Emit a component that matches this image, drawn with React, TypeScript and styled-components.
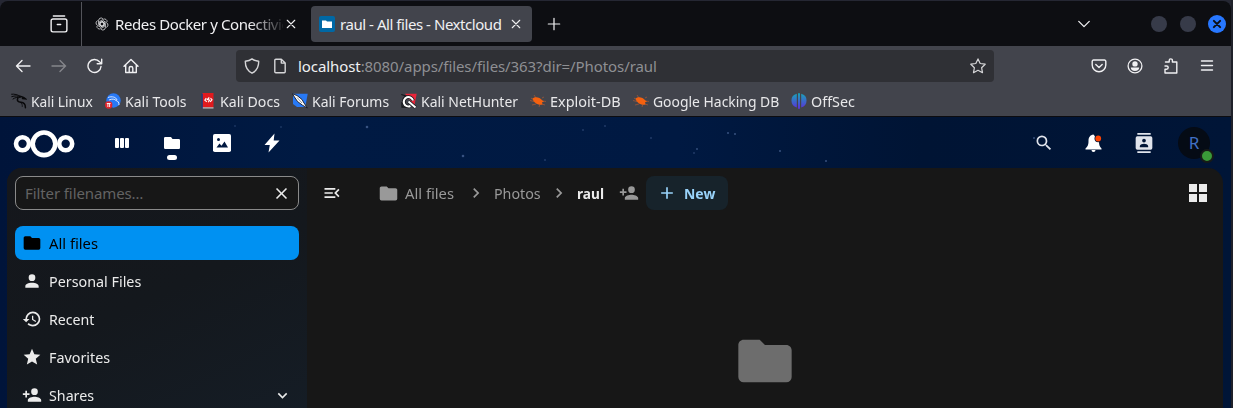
import React from 'react';
import styled, { createGlobalStyle } from 'styled-components';

const GlobalStyle = createGlobalStyle`
  * { box-sizing: border-box; }
  body {
    margin: 0;
    overflow: hidden;
    font-family: "Noto Sans", "Open Sans", sans-serif;
    font-size: 15px;
    background: #1e202a;
  }
  svg { display: block; flex: none; }
`;

const Window = styled.div`
  width: 1233px;
  height: 408px;
  padding-top: 1px;
  border-right: 2px solid #1f2129;
  background: #252733;
  display: flex;
  flex-direction: column;
  overflow: hidden;
`;

const Label = styled.span<{ $w: number; $gap?: number; $narrow?: number; $tone?: string; $bold?: boolean }>`
  flex: none;
  width: ${p => p.$w}px;
  letter-spacing: ${p => p.$gap ?? 0}px;
  transform: ${p => (p.$narrow ? `scaleX(${p.$narrow})` : 'none')};
  transform-origin: left;
  color: ${p => p.$tone ?? 'inherit'};
  font-weight: ${p => (p.$bold ? 700 : 400)};
  line-height: 20px;
  white-space: nowrap;
`;

const TabBar = styled.div`
  height: 45px;
  flex: none;
  display: flex;
  align-items: center;
  background: #0d0e12;
  color: #f0f0f2;
  border-radius: 8px 8px 0 0;
`;

const FirefoxView = styled.div`
  width: 82px;
  height: 44px;
  padding-left: 50px;
  display: flex;
  align-items: center;
  border-right: 1px solid #53545a;
`;

const Tab = styled.div<{ $active?: boolean }>`
  width: ${p => (p.$active ? 221 : 229)}px;
  height: 36px;
  display: flex;
  align-items: center;
  padding-left: ${p => (p.$active ? 8 : 13)}px;
  border-radius: 4px;
  background: ${p => (p.$active ? '#42444c' : 'transparent')};
`;

const TabTitle = styled(Label)<{ $fade?: boolean }>`
  margin-left: ${p => (p.$fade ? 6 : 5)}px;
  margin-right: ${p => (p.$fade ? 2 : 4)}px;
  mask-image: ${p => (p.$fade ? 'linear-gradient(to right, #000 80%, transparent 102%)' : 'none')};
`;

const NewTab = styled.div`
  margin-left: 15px;
  flex: 1;
`;

const WindowButtons = styled.div`
  display: flex;
  align-items: center;
  gap: 13px;
  margin-left: 60px;
  padding-right: 5px;
`;

const WindowDot = styled.div`
  width: 16px;
  height: 16px;
  border-radius: 50%;
  background: #373b49;
`;

const CloseDot = styled.div`
  width: 18px;
  height: 18px;
  margin-left: -1px;
  border-radius: 50%;
  background: #2777ff;
  color: #0d0e12;
  display: flex;
  align-items: center;
  justify-content: center;
`;

const Toolbar = styled.div`
  height: 40px;
  flex: none;
  display: flex;
  align-items: center;
  background: #42444c;
  color: #f0f0f2;
`;

const NavButtons = styled.div`
  width: 236px;
  padding-left: 15px;
  display: flex;
  gap: 20px;
`;

const UrlBar = styled.div`
  width: 758px;
  height: 32px;
  display: flex;
  align-items: center;
  padding: 0 8px;
  border-radius: 4px;
  background: #2f3035;
  color: #d6d6d8;
`;

const PageInfo = styled.div`
  margin-left: 12px;
`;

const Url = styled.div`
  flex: 1;
  margin-left: 10px;
  color: #8e8f93;
  letter-spacing: -0.08px;
  white-space: nowrap;
`;

const Host = styled.span`
  color: #f0f0f2;
`;

const ToolbarActions = styled.div`
  margin-left: auto;
  padding-right: 16px;
  display: flex;
  gap: 20px;
`;

const Bookmarks = styled.div`
  height: 31px;
  flex: none;
  display: flex;
  align-items: center;
  padding-left: 11px;
  background: #42444c;
  border-bottom: 1px solid #0c0c10;
  color: #e8e8ea;
`;

const Bookmark = styled.div`
  display: flex;
  align-items: center;
  gap: 4px;
  margin-right: 12px;
`;

const Page = styled.div`
  position: relative;
  flex: 1;
  display: flex;
  flex-direction: column;
  background: linear-gradient(90deg, #00143a 0%, #001a43 25%, #001942 55%, #001434 75%, #001537 100%);
`;

const Stars = styled.svg`
  position: absolute;
  top: 0;
  left: 0;
`;

const Header = styled.div`
  height: 51px;
  flex: none;
  display: flex;
  align-items: center;
  padding: 0 12px;
  color: #fff;
`;

const Logo = styled.svg`
  margin-right: 22px;
`;

const AppEntry = styled.div`
  position: relative;
  width: 50px;
  height: 51px;
  display: flex;
  align-items: center;
  justify-content: center;
`;

const ActiveMark = styled.div`
  position: absolute;
  left: 20px;
  top: 38px;
  width: 10px;
  height: 5px;
  border-radius: 3px;
  background: #fff;
`;

const HeaderEnd = styled.div`
  margin-left: auto;
  display: flex;
  color: #e0e4ec;
`;

const Avatar = styled.div`
  width: 32px;
  height: 32px;
  border-radius: 50%;
  background: #050b15;
  color: #4170c4;
  font-size: 17px;
  line-height: 32px;
  text-align: center;
`;

const Status = styled.div`
  position: absolute;
  left: 31px;
  top: 32px;
  width: 14px;
  height: 14px;
  border-radius: 50%;
  border: 2px solid #171b18;
  background: #3a9a38;
`;

const Panel = styled.div`
  flex: 1;
  min-height: 0;
  margin: 0 8px 0 7px;
  display: flex;
  border-radius: 15px 15px 0 0;
  background: #171717;
  overflow: hidden;
`;

const Sidebar = styled.div`
  width: 300px;
  flex: none;
  padding: 8px;
  background: linear-gradient(155deg, #15171c 0%, #14181d 50%, #151d26 100%);
`;

const Filter = styled.div`
  height: 34px;
  margin-bottom: 16px;
  padding: 0 7px 0 9px;
  display: flex;
  align-items: center;
  justify-content: space-between;
  border: 1px solid #8a8a8a;
  border-radius: 8px;
  background: #171717;
  color: #ebebeb;
`;

const NavItem = styled.div<{ $active?: boolean }>`
  height: 34px;
  margin-bottom: 4px;
  padding: 0 7px;
  display: flex;
  align-items: center;
  gap: 7px;
  border-radius: 8px;
  background: ${p => (p.$active ? '#0091f2' : 'transparent')};
  color: ${p => (p.$active ? '#000' : '#ebebeb')};
`;

const Spacer = styled.div`
  flex: 1;
`;

const Main = styled.div`
  flex: 1;
  display: flex;
  flex-direction: column;
  align-items: center;
`;

const Crumbs = styled.div`
  width: 100%;
  height: 50px;
  padding: 0 16px 0 15px;
  display: flex;
  align-items: center;
  color: #999;
`;

const Collapse = styled.div`
  color: #ebebeb;
`;

const CrumbFolder = styled.div`
  margin: 0 6px 0 36px;
`;

const Chevron = styled.div<{ $before: number }>`
  margin: 0 8px 0 ${p => p.$before}px;
`;

const ShareMark = styled.div`
  margin: 0 7px 0 14px;
`;

const NewButton = styled.div`
  width: 82px;
  height: 34px;
  padding-left: 11px;
  display: flex;
  align-items: center;
  gap: 7px;
  border-radius: 8px;
  background: #17232b;
  color: #99d3fa;
`;

const EmptyState = styled.div`
  margin-top: 111px;
  color: #6d6d6d;
`;

const shapes = {
  folder: 'M10,4H4C2.89,4 2,4.89 2,6V18A2,2 0 0,0 4,20H20A2,2 0 0,0 22,18V8C22,6.89 21.1,6 20,6H12L10,4Z',
  account: 'M12,4A4,4 0 0,1 16,8A4,4 0 0,1 12,12A4,4 0 0,1 8,8A4,4 0 0,1 12,4M12,14C16.42,14 20,15.79 20,18V20H4V18C4,15.79 7.58,14 12,14Z',
  history: 'M13.5,8H12V13L16.28,15.54L17,14.33L13.5,12.25V8M13,3A9,9 0 0,0 4,12H1L4.96,16.03L9,12H6A7,7 0 0,1 13,5A7,7 0 0,1 20,12A7,7 0 0,1 13,19C11.07,19 9.32,18.21 8.06,16.94L6.64,18.36C8.27,20 10.5,21 13,21A9,9 0 0,0 22,12A9,9 0 0,0 13,3',
  star: 'M12,17.27L18.18,21L16.54,13.97L22,9.24L14.81,8.62L12,2L9.19,8.62L2,9.24L7.45,13.97L5.82,21L12,17.27Z',
  accountPlus: 'M15,14C12.33,14 7,15.33 7,18V20H23V18C23,15.33 17.67,14 15,14M6,10V7H4V10H1V12H4V15H6V12H9V10M15,12A4,4 0 0,0 19,8A4,4 0 0,0 15,4A4,4 0 0,0 11,8A4,4 0 0,0 15,12Z',
  right: 'M8.59,16.58L13.17,12L8.59,7.41L10,6L16,12L10,18L8.59,16.58Z',
  down: 'M7.41,8.58L12,13.17L16.59,8.58L18,10L12,16L6,10L7.41,8.58Z',
  menuOpen: 'M21,15.61L19.59,17L14.58,12L19.59,7L21,8.39L17.44,12L21,15.61M3,6H16V8H3V6M3,13V11H13V13H3M3,18V16H16V18H3Z',
  plus: 'M19,13H13V19H11V13H5V11H11V5H13V11H19V13Z',
  close: 'M19,6.41L17.59,5L12,10.59L6.41,5L5,6.41L10.59,12L5,17.59L6.41,19L12,13.41L17.59,19L19,17.59L13.41,12L19,6.41Z',
  magnify: 'M9.5,3A6.5,6.5 0 0,1 16,9.5C16,11.11 15.41,12.59 14.44,13.73L14.71,14H15.5L20.5,19L19,20.5L14,15.5V14.71L13.73,14.44C12.59,15.41 11.11,16 9.5,16A6.5,6.5 0 0,1 3,9.5A6.5,6.5 0 0,1 9.5,3M9.5,5C7,5 5,7 5,9.5C5,12 7,14 9.5,14C12,14 14,12 14,9.5C14,7 12,5 9.5,5Z',
  contacts: 'M20,0H4V2H20V0M4,24H20V22H4V24M20,4H4A2,2 0 0,0 2,6V18A2,2 0 0,0 4,20H20A2,2 0 0,0 22,18V6A2,2 0 0,0 20,4M12,6.75A2.25,2.25 0 0,1 14.25,9A2.25,2.25 0 0,1 12,11.25A2.25,2.25 0 0,1 9.75,9A2.25,2.25 0 0,1 12,6.75M17,17H7V15.5C7,13.83 10.33,13 12,13C13.67,13 17,13.83 17,15.5V17Z',
};

const Icon = ({ name, size = 20 }: { name: keyof typeof shapes; size?: number }) => (
  <svg width={size} height={size} viewBox="0 0 24 24" fill="currentColor"><path d={shapes[name]} /></svg>
);

const Line = ({ children, size = 16, stroke = 1.4 }: { children: React.ReactNode; size?: number; stroke?: number }) => (
  <svg width={size} height={size} viewBox="0 0 16 16" fill="none" stroke="currentColor" strokeWidth={stroke} strokeLinecap="round" strokeLinejoin="round">{children}</svg>
);

const OpenAi = () => (
  <svg width="14" height="14" viewBox="0 0 24 24" fill="none" stroke="#dcdcde" strokeWidth="1.3" strokeLinejoin="round">
    {[0, 60, 120, 180, 240, 300].map(a => (
      <path key={a} transform={`rotate(${a} 12 12)`} d="M8.6 14V7.3L14.2 4a4.4 4.4 0 0 1 6.5 4.6M8.6 10l3.4-2 5.8 3.3" />
    ))}
  </svg>
);

const Dragon = () => (
  <svg width="16" height="16" viewBox="0 0 16 16" fill="none" stroke="#08080a" strokeLinecap="round">
    <path d="M.6 1.2C3.5.9 6.5 1.6 9 3.2M.8 3.6C4 2.5 7 2.8 9.5 4M2 6c2-1.500 4.500-2 7-1.600" strokeWidth="1" />
    <path d="M9 3.2c2.5.3 3.8 1 5.5 2.600l-3-.4M7 4.800C5.500 7.500 7 9 10 9.300c3 .3 4.500 2.200 4.400 5.400" strokeWidth="1.5" />
    <path d="M9.500 9.500c1.500 1 2 2.500 1.800 4" strokeWidth=".8" />
  </svg>
);

const Tools = () => (
  <svg width="16" height="16" viewBox="0 0 16 16">
    <circle cx="8.500" cy="7.500" r="7.200" fill="#2879f5" />
    <path d="M3 4.500c4-1.500 8-.5 9 2.500M4 7c3-1.500 6-1 7 .5 2 .5 3 2 3 4.500" stroke="#dbe9ff" strokeWidth="1" fill="none" />
    <circle cx="3.700" cy="12" r="3.700" fill="#e0242c" />
    <path d="M1.800 10.500h3.800M2.900 10.500V14M4.600 10.500V14" stroke="#fff" strokeWidth=".9" />
  </svg>
);

const Docs = () => (
  <svg width="16" height="16" viewBox="0 0 16 16">
    <path d="M2 0h11.500v14.500H2z" fill="#e01a1e" /><path d="M1.500.5h1.300v15H1.500z" fill="#173a82" />
    <path d="M2.800 14.300h10.700v1.200H2.800z" fill="#c9c4c4" />
    <path d="M6.300 5 4.800 7.200 6.800 8.700M10.500 5l1.500 1.700-1.800 2.300M9.300 4.500 7.300 6.500l2.400.6-1.500 2.200" stroke="#fff" strokeWidth="1.100" fill="none" />
  </svg>
);

const Forums = () => (
  <svg width="16" height="16" viewBox="0 0 16 16">
    <path d="M1 .8h14.700L13.300 14H5L1 11z" fill="#2879f5" />
    <path d="M.3.8 5 2.500l5 4 2 3.500 3.300 5-4.800-2.800L5.500 8.500z" fill="#fff" stroke="#171a22" strokeWidth=".9" />
    <path d="m5 4.500 5 5.500" stroke="#60656f" strokeWidth=".7" />
  </svg>
);

const NetHunter = () => (
  <svg width="16" height="16" viewBox="0 0 16 16">
    <path d="M4 .8h11.700L13.500 12 8 6z" fill="#e9253a" />
    <path d="M.3 1.500 5 3 2 6M1 9v5h4" stroke="#15161a" strokeWidth="1.300" fill="none" />
    <path d="M12 7.500A4.700 4.700 0 1 0 9.500 13M7.500 8.500l7 6" fill="none" stroke="#15161a" strokeWidth="3.600" />
    <path d="M12 7.500A4.700 4.700 0 1 0 9.500 13M7.500 8.500l7 6" fill="none" stroke="#fff" strokeWidth="2.100" />
  </svg>
);

const Exploit = () => (
  <svg width="16" height="16" viewBox="0 0 16 16">
    <path d="m1 5 3 2M4 2l2 3M0 7.500l4 1M2 12l4-1M9 14l1-3M12 5l2-1M13 8l3 .5M12 11l3 1" stroke="#a85a38" strokeWidth=".7" />
    <path d="M2.500 5.500C5.500 3 10 4.500 12 7l2 1.800-2 .4.500 2.300C9 12.300 5.500 11 3.500 8z" fill="#f5610f" />
  </svg>
);

const OffSec = () => (
  <svg width="16" height="16" viewBox="0 0 16 16">
    <defs><linearGradient id="offsec" x2="0" y2="1"><stop stopColor="#18a4b8" /><stop offset="1" stopColor="#5c2fdc" /></linearGradient></defs>
    <path d="M5.800.8v13.600A7 7 0 0 1 5.800.8zM7 .3h2v15.400H7zM10.200.8a7 7 0 0 1 0 13.600z" fill="url(#offsec)" />
  </svg>
);

const bookmarks: [string, number, number, () => React.ReactElement][] = [
  ['Kali Linux', 62, 0.915, Dragon],
  ['Kali Tools', 63, 0.935, Tools],
  ['Kali Docs', 60, 0.94, Docs],
  ['Kali Forums', 77, 0.93, Forums],
  ['Kali NetHunter', 97, 0.93, NetHunter],
  ['Exploit-DB', 71, 0.965, Exploit],
  ['Google Hacking DB', 126, 0.927, Exploit],
  ['OffSec', 50, 0.955, OffSec],
];

const starPoints = [[367, 10, 1.3], [463, 39, 1.3], [545, 43, .8], [583, 13, .8], [605, 9, .8], [651, 21, .8], [728, 16, 1], [735, 17, 1], [697, 32, .9], [694, 36, .8], [780, 34, 1], [826, 44, 1], [1034, 21, 1], [235, 9, .7], [281, 10, .7]];

export default function App() {
  return (
    <>
      <GlobalStyle />
      <Window>
        <TabBar>
          <FirefoxView>
            <Line size={18} stroke={1.25}><path d="M3 .9h10M2.600 3.600h10.800a1.600 1.600 0 0 1 1.600 1.600v8.200a1.600 1.600 0 0 1-1.600 1.600H2.600A1.600 1.600 0 0 1 1 13.400V5.200a1.600 1.600 0 0 1 1.600-1.600zM6.500 8.500h3" /></Line>
          </FirefoxView>
          <Tab>
            <OpenAi />
            <TabTitle $w={168} $gap={-0.4} $fade>Redes Docker y Conectivid</TabTitle>
            <Line size={12} stroke={1.5}><path d="m3 3 10 10M13 3 3 13" /></Line>
          </Tab>
          <Tab $active>
            <svg width="16" height="16" viewBox="0 0 16 16"><rect width="16" height="16" rx="2" fill="#0068a5" /><path d="M3 4.500h4l1 1h5v6.500H3z" fill="#fff" /></svg>
            <TabTitle $w={166} $gap={-0.45}>raul - All files - Nextcloud</TabTitle>
            <Line size={12} stroke={1.5}><path d="m3 3 10 10M13 3 3 13" /></Line>
          </Tab>
          <NewTab><Line size={14}><path d="M8 1.500v13M1.500 8h13" /></Line></NewTab>
          <Line size={14} stroke={1.5}><path d="m2 5 6 6 6-6" /></Line>
          <WindowButtons>
            <WindowDot /><WindowDot />
            <CloseDot><Line size={10} stroke={3.2}><path d="m3 3 10 10M13 3 3 13" /></Line></CloseDot>
          </WindowButtons>
        </TabBar>
        <Toolbar>
          <NavButtons>
            <Line><path d="M15 8H1.500M7 2.500 1.500 8 7 13.500" /></Line>
            <svg width="16" height="16" viewBox="0 0 16 16" fill="none" stroke="#85868b" strokeWidth="1.400" strokeLinecap="round"><path d="M1 8h13.500M9 2.500 14.500 8 9 13.500" /></svg>
            <Line><path d="M14 8.500A6.500 6.500 0 1 1 12.500 3.800L14.500 5.500M14.700 1.200v4.500h-4.500" /></Line>
            <Line><path d="M1 8.300 8 1.500l7 6.800M2.700 7v7.500h10.600V7M6.200 14.300v-4a1.800 1.800 0 0 1 3.600 0v4" /></Line>
          </NavButtons>
          <UrlBar>
            <Line><path d="M8 .9C6 2.500 4 3 1.300 3.200 1.200 8.500 3 12.800 8 15.200c5-2.400 6.800-6.700 6.700-12C12 3 10 2.500 8 .9z" /></Line>
            <PageInfo>
              <Line><path d="M3.800 1.200h5.500l3.900 3.900v8.700a1 1 0 0 1-1 1H3.800a1 1 0 0 1-1-1V2.200a1 1 0 0 1 1-1zM9.300 1.200v3.900h3.900" /></Line>
            </PageInfo>
            <Url><Host>localhost</Host>:8080/apps/files/files/363?dir=/Photos/raul</Url>
            <Line stroke={1.2}><path d="m8 .9 2.200 4.600 5 .7-3.600 3.500.9 5L8 12.300l-4.500 2.400.9-5L.8 6.200l5-.7z" /></Line>
          </UrlBar>
          <ToolbarActions>
            <Line><path d="M2.500 2h11a1.300 1.300 0 0 1 1.300 1.300V7a6.800 6.800 0 0 1-13.600 0V3.300A1.300 1.300 0 0 1 2.500 2zM4.800 6.500 8 9.500l3.200-3" /></Line>
            <svg width="16" height="16" viewBox="0 0 16 16" fill="currentColor"><circle cx="8" cy="8" r="6.900" fill="none" stroke="currentColor" strokeWidth="1.300" /><circle cx="8" cy="5.900" r="2.700" /><path d="M3.800 9.500h8.400c0 2-1.700 3.500-4.200 3.500s-4.200-1.500-4.200-3.500z" /></svg>
            <Line><path d="M2.500 4h3.700V2.500a1.600 1.600 0 0 1 3.200 0V4h4.400v11H2v-3.800h1.600a1.600 1.600 0 0 0 0-3.200H2" /></Line>
            <Line><path d="M2.500 3h11M2.500 7.500h11M2.500 12h11" /></Line>
          </ToolbarActions>
        </Toolbar>
        <Bookmarks>
          {bookmarks.map(([label, w, narrow, Glyph]) => (
            <Bookmark key={label}><Glyph /><Label $w={w} $narrow={narrow}>{label}</Label></Bookmark>
          ))}
        </Bookmarks>
        <Page>
          <Stars width="1231" height="51" fill="#6580b5" opacity=".55">
            {starPoints.map(([x, y, r]) => <circle key={x} cx={x} cy={y} r={r} />)}
          </Stars>
          <Header>
            <Logo width="63" height="30" viewBox="0 0 63 30" fill="none" stroke="#fff" strokeWidth="4.600">
              <circle cx="10.500" cy="15.800" r="6.500" /><circle cx="32" cy="15.800" r="11.300" /><circle cx="53.700" cy="15.800" r="6.500" />
            </Logo>
            <AppEntry><svg width="14" height="10" fill="#fff"><rect width="4" height="10" rx="1" /><rect x="5" width="4" height="10" rx="1" /><rect x="10" width="4" height="10" rx="1" /></svg></AppEntry>
            <AppEntry>
              <svg width="16" height="12" viewBox="0 0 16 12" fill="#fff"><path d="M1.200 0H7l1.500 2h6.300A1.200 1.200 0 0 1 16 3.200v7.600a1.200 1.200 0 0 1-1.200 1.200H1.200A1.200 1.200 0 0 1 0 10.800V1.200A1.200 1.200 0 0 1 1.200 0z" /></svg>
              <ActiveMark />
            </AppEntry>
            <AppEntry><svg width="18" height="18" viewBox="0 0 18 18"><rect width="18" height="18" rx="1.800" fill="#fff" /><circle cx="5.500" cy="5.500" r="1.500" fill="#001840" /><path d="M3.500 13.500 6.500 9.500l2 2.300 3-4.300 3.500 6z" fill="#001840" /></svg></AppEntry>
            <AppEntry><svg width="16" height="20" viewBox="0 0 16 20" fill="#fff"><path d="M10.500.5.500 12h5.300L4.500 19.500 15.500 7.500H9.700z" /></svg></AppEntry>
            <HeaderEnd>
              <AppEntry><Icon name="magnify" /></AppEntry>
              <AppEntry><svg width="18" height="18" viewBox="0 0 18 18" fill="#fff"><path d="M8.500.5C5 1 3.500 3.500 3.500 7c0 4-.8 5.500-3 7.500V15.500h16V14.500c-2-2-2.500-3.500-2.500-7zM6.500 16h4a2 2 0 0 1-4 0z" /><circle cx="13.200" cy="4.500" r="3.700" fill="#001537" /><circle cx="13.200" cy="4.500" r="2.900" fill="#ff4402" /></svg></AppEntry>
              <AppEntry><Icon name="contacts" /></AppEntry>
              <AppEntry><Avatar>R</Avatar><Status /></AppEntry>
            </HeaderEnd>
          </Header>
          <Panel>
            <Sidebar>
              <Filter><Label $w={120} $gap={-0.1} $tone="#636363">Filter filenames…</Label><Icon name="close" size={19} /></Filter>
              <NavItem $active><Icon name="folder" /><Label $w={80} $narrow={0.985}>All files</Label></NavItem>
              <NavItem><Icon name="account" /><Label $w={110} $narrow={0.955}>Personal Files</Label></NavItem>
              <NavItem><Icon name="history" /><Label $w={80} $narrow={0.945}>Recent</Label></NavItem>
              <NavItem><Icon name="star" /><Label $w={80} $narrow={0.955}>Favorites</Label></NavItem>
              <NavItem><Icon name="accountPlus" /><Label $w={80} $narrow={0.95}>Shares</Label><Spacer /><Icon name="down" size={19} /></NavItem>
            </Sidebar>
            <Main>
              <Crumbs>
                <Collapse><Icon name="menuOpen" /></Collapse>
                <CrumbFolder><Icon name="folder" size={21} /></CrumbFolder>
                <Label $w={49} $narrow={0.985}>All files</Label>
                <Chevron $before={12}><Icon name="right" /></Chevron>
                <Label $w={46} $narrow={0.95}>Photos</Label>
                <Chevron $before={9}><Icon name="right" /></Chevron>
                <Label $w={28} $narrow={0.91} $tone="#ebebeb" $bold>raul</Label>
                <ShareMark><Icon name="accountPlus" /></ShareMark>
                <NewButton><Icon name="plus" /><Label $w={34} $narrow={0.93} $bold>New</Label></NewButton>
                <Spacer />
                <svg width="18" height="18" fill="#ebebeb"><path d="M0 0h8v8H0zM10 0h8v8h-8zM0 10h8v8H0zM10 10h8v8h-8z" /></svg>
              </Crumbs>
              <EmptyState><Icon name="folder" size={64} /></EmptyState>
            </Main>
          </Panel>
        </Page>
      </Window>
    </>
  );
}
